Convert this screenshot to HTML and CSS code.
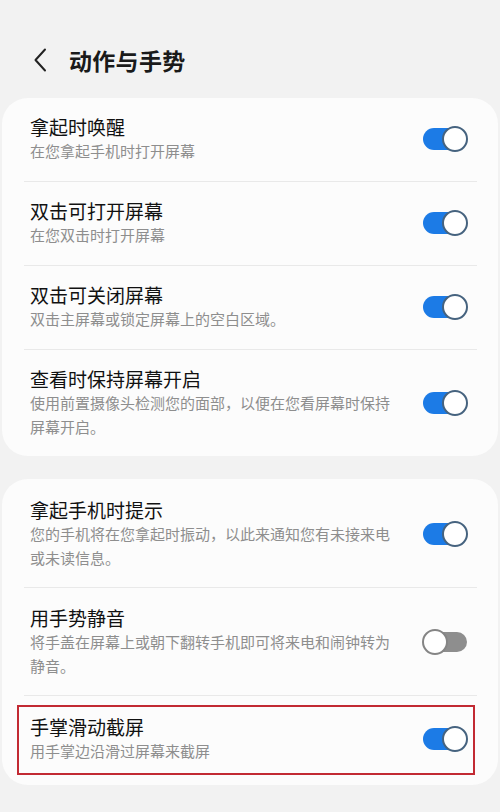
FILE: index.html
```html
<!DOCTYPE html>
<html lang="zh-CN">
<head>
<meta charset="utf-8">
<link rel="stylesheet" href="styles.css">
</head>
<body>
<div class="screen">
  <header class="topbar">
    <svg class="back" width="16" height="26" viewBox="0 0 16 26"><path d="M13 2.5 L3.5 13 L13 23.5" fill="none" stroke="#222" stroke-width="2" stroke-linecap="round" stroke-linejoin="round"/></svg>
    <h1 class="title">动作与手势</h1>
  </header>

  <section class="card">
    <div class="item">
      <div class="text"><div class="name">拿起时唤醒</div><div class="desc">在您拿起手机时打开屏幕</div></div>
      <div class="toggle on"><span class="thumb"></span></div>
    </div>
    <div class="divider"></div>
    <div class="item">
      <div class="text"><div class="name">双击可打开屏幕</div><div class="desc">在您双击时打开屏幕</div></div>
      <div class="toggle on"><span class="thumb"></span></div>
    </div>
    <div class="divider"></div>
    <div class="item">
      <div class="text"><div class="name">双击可关闭屏幕</div><div class="desc">双击主屏幕或锁定屏幕上的空白区域。</div></div>
      <div class="toggle on"><span class="thumb"></span></div>
    </div>
    <div class="divider"></div>
    <div class="item end">
      <div class="text"><div class="name">查看时保持屏幕开启</div><div class="desc">使用前置摄像头检测您的面部，以便在您看屏幕时保持屏幕开启。</div></div>
      <div class="toggle on"><span class="thumb"></span></div>
    </div>
  </section>

  <section class="card">
    <div class="item tall first">
      <div class="text"><div class="name">拿起手机时提示</div><div class="desc">您的手机将在您拿起时振动，以此来通知您有未接来电或未读信息。</div></div>
      <div class="toggle on"><span class="thumb"></span></div>
    </div>
    <div class="divider"></div>
    <div class="item tall">
      <div class="text"><div class="name">用手势静音</div><div class="desc">将手盖在屏幕上或朝下翻转手机即可将来电和闹钟转为静音。</div></div>
      <div class="toggle off"><span class="thumb"></span></div>
    </div>
    <div class="divider"></div>
    <div class="item last">
      <div class="text"><div class="name">手掌滑动截屏</div><div class="desc">用手掌边沿滑过屏幕来截屏</div></div>
      <div class="toggle on"><span class="thumb"></span></div>
      <div class="highlight"></div>
    </div>
  </section>
</div>
</body>
</html>
```
FILE: styles.css
```css
html, body {
  margin: 0;
  padding: 0;
  background: #f2f2f2;
}
body {
  width: 500px;
  height: 812px;
  overflow: hidden;
  font-family: "Noto Sans CJK SC", "Noto Sans", sans-serif;
}
.screen {
  padding: 0 2px;
}
.topbar {
  display: flex;
  align-items: center;
  height: 40px;
  padding: 40px 0 18px 30px;
}
.back {
  display: block;
}
.title {
  margin: 0 0 0 21px;
  font-size: 23px;
  font-weight: 700;
  color: #1a1a1a;
  letter-spacing: 0.3px;
}
.card {
  background: #fcfcfc;
  border-radius: 26px;
  margin-bottom: 23px;
}
.item {
  position: relative;
  display: flex;
  align-items: center;
  padding: 17px 31px 18px 28px;
}
.item.end {
  padding-bottom: 17px;
}
.item.tall {
  padding-top: 18px;
  padding-bottom: 17px;
}
.item.tall.first {
  padding-top: 19px;
}
.item.last {
  padding-top: 19px;
  padding-bottom: 22px;
}
.text {
  width: 370px;
  margin-right: 23px;
}
.name {
  font-size: 19px;
  line-height: 24px;
  color: #111;
}
.desc {
  font-size: 15px;
  line-height: 24px;
  color: #8e8e8e;
}
.divider {
  height: 1px;
  background: #e9e9e9;
  margin: 0 21px 0 22px;
}
.toggle {
  position: relative;
  width: 44px;
  height: 26px;
  flex: none;
}
.toggle::before {
  content: "";
  position: absolute;
  top: 2px;
  height: 22px;
  border-radius: 11px;
}
.toggle.on::before {
  left: 0;
  width: 40px;
  background: #1c7be6;
}
.toggle.off::before {
  left: 8px;
  right: 0;
  top: 3px;
  height: 20px;
  border-radius: 10px;
  background: #8e8e8e;
}
.thumb {
  position: absolute;
  top: 0;
  width: 22px;
  height: 22px;
  border-radius: 50%;
  background: #fff;
  border: 2px solid #46637f;
}
.toggle.on .thumb {
  left: 19px;
}
.toggle.off .thumb {
  left: -1px;
  border-color: #858585;
}
.highlight {
  position: absolute;
  left: 15px;
  top: 9px;
  width: 454px;
  height: 66px;
  border: 2px solid #c22a33;
}
```
